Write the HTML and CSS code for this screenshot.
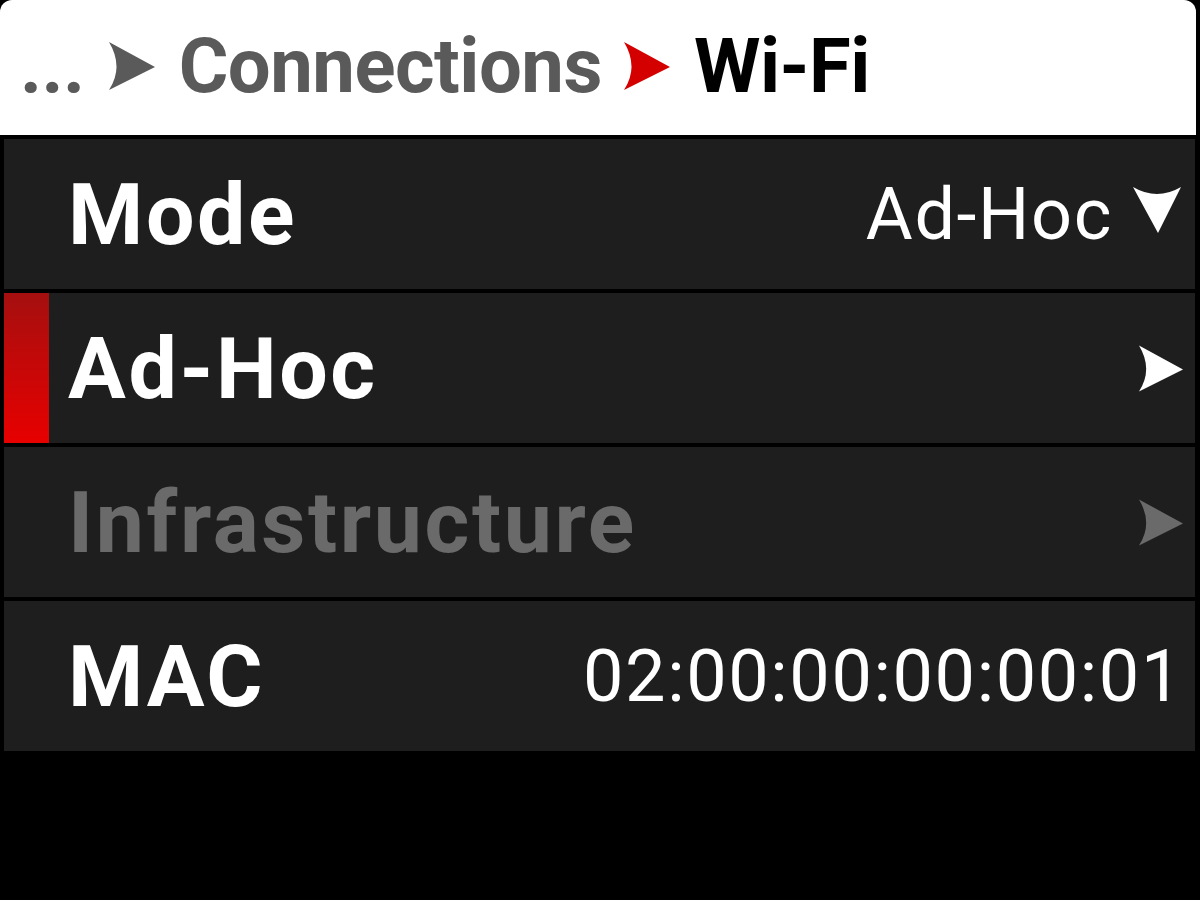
FILE: index.html
```html
<!DOCTYPE html>
<html>
<head>
<meta charset="utf-8">
<link rel="stylesheet" href="styles.css">
</head>
<body>
<div class="screen">
  <header class="crumbs">
    <span class="crumb-dots">...</span>
    <svg class="crumb-arrow grey" viewBox="0 0 46 48"><path d="M0 0 L46 25 L0 48 Q15 25 0 0 Z"/></svg>
    <span class="crumb-parent">Connections</span>
    <svg class="crumb-arrow red" viewBox="0 0 46 48"><path d="M0 0 L46 25 L0 48 Q15 25 0 0 Z"/></svg>
    <span class="crumb-current">Wi-Fi</span>
  </header>
  <div class="list">
    <div class="row">
      <span class="label">Mode</span>
      <span class="value">Ad-Hoc</span>
      <svg class="drop" viewBox="0 0 48 46"><path d="M0 0 Q24 14 48 0 L25 46 Z"/></svg>
    </div>
    <div class="row selected">
      <span class="marker"></span>
      <span class="label">Ad-Hoc</span>
      <svg class="go" viewBox="0 0 46 48"><path d="M0 0 L46 25 L0 48 Q15 25 0 0 Z"/></svg>
    </div>
    <div class="row disabled">
      <span class="label">Infrastructure</span>
      <svg class="go" viewBox="0 0 46 48"><path d="M0 0 L46 25 L0 48 Q15 25 0 0 Z"/></svg>
    </div>
    <div class="row">
      <span class="label">MAC</span>
      <span class="value mac">02:00:00:00:00:01</span>
    </div>
  </div>
</div>
</body>
</html>
```
FILE: styles.css
```css
html, body {
  margin: 0;
  padding: 0;
  background: #000;
  width: 1200px;
  height: 900px;
  overflow: hidden;
  font-family: Roboto, "Liberation Sans", sans-serif;
}
.screen {
  width: 1200px;
  height: 900px;
  display: flex;
  flex-direction: column;
}
.crumbs {
  height: 135px;
  background: #fff;
  border-radius: 12px 12px 0 0;
  margin-right: 4px;
  display: flex;
  align-items: center;
  padding: 0 0 4px 20px;
  box-sizing: border-box;
  font-weight: 700;
  font-size: 76px;
  letter-spacing: -0.5px;
}
.crumb-dots {
  color: #5a5a5a;
  margin-right: 24px;
}
.crumb-arrow {
  width: 46px;
  height: 48px;
  margin-right: 24px;
}
.crumb-arrow.grey { fill: #5a5a5a; }
.crumb-arrow.red { fill: #d40000; }
.crumb-parent {
  color: #5a5a5a;
  margin-right: 22px;
}
.crumb-current {
  color: #000;
}
.list {
  display: flex;
  flex-direction: column;
  gap: 4px;
  padding: 4px 5px 0 4px;
}
.row {
  position: relative;
  height: 150px;
  background: #1e1e1e;
  display: flex;
  align-items: center;
  padding: 0 12px 0 64px;
  box-sizing: border-box;
}
.label {
  color: #fff;
  font-weight: 700;
  font-size: 86px;
  letter-spacing: 2.6px;
  flex: 1;
}
.value {
  color: #fff;
  font-size: 72px;
  font-weight: 400;
  letter-spacing: 1.6px;
}
.drop {
  width: 48px;
  height: 46px;
  fill: #fff;
  margin-left: 20px;
  margin-bottom: 8px;
  margin-right: 2px;
}
.go {
  width: 44px;
  height: 47px;
  fill: #fff;
}
.selected .marker {
  position: absolute;
  left: 0;
  top: 0;
  bottom: 0;
  width: 45px;
  background: linear-gradient(#a50f0f, #e80000);
}
.disabled .label { color: #6a6a6a; }
.disabled .go { fill: #6a6a6a; }
```
